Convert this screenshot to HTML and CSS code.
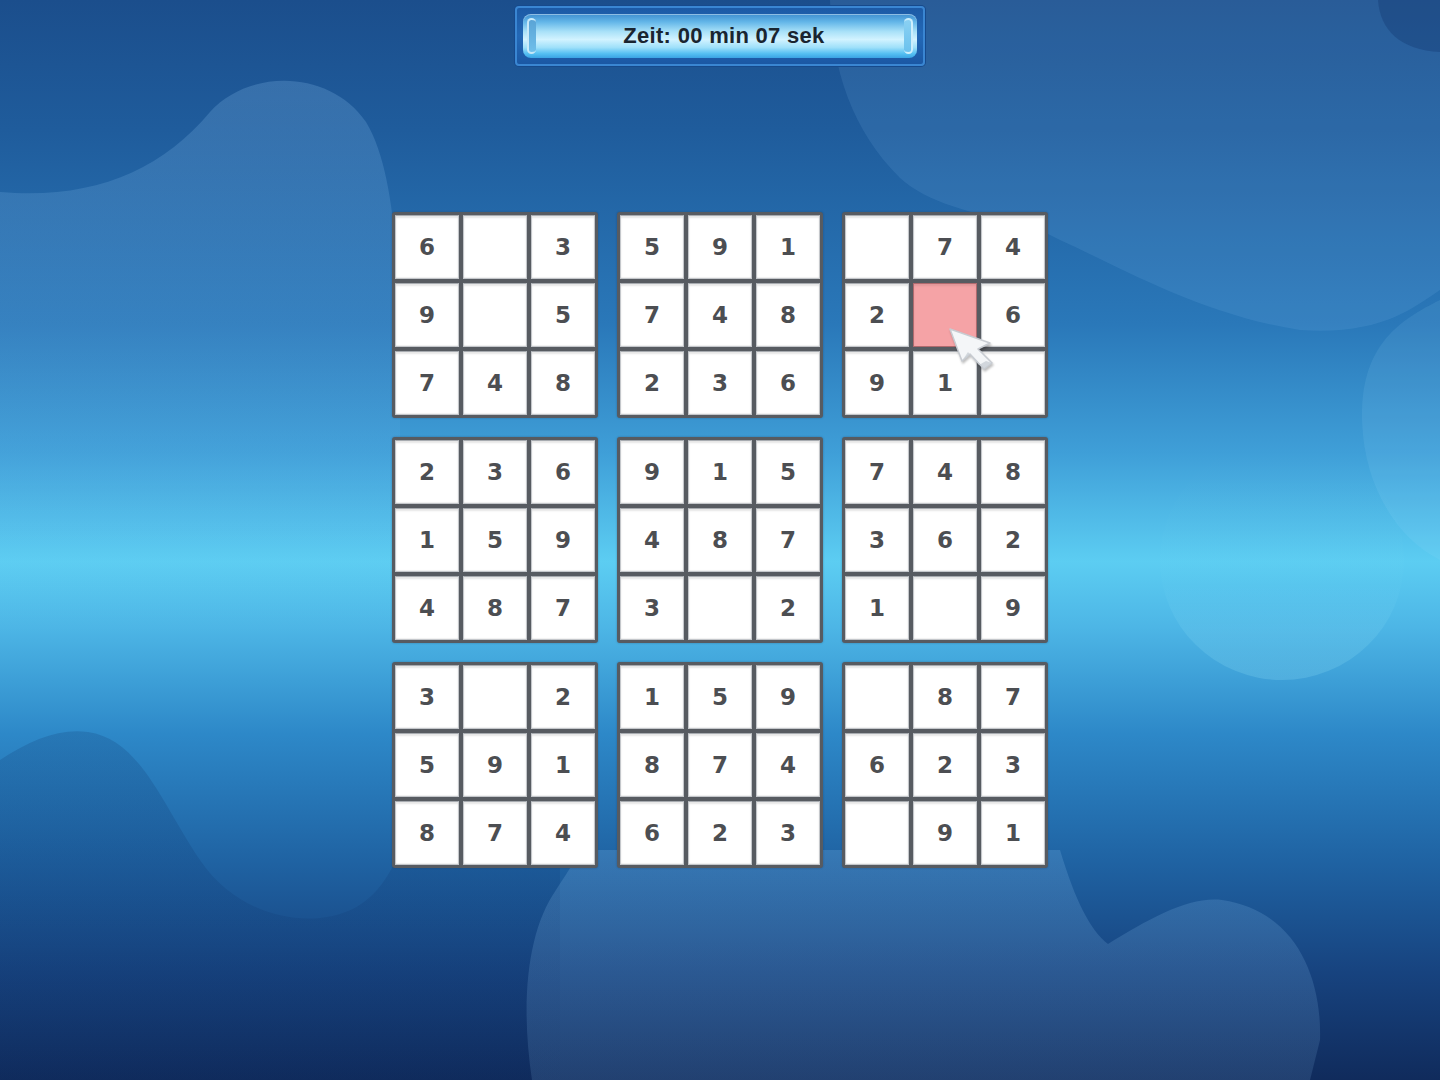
FILE: index.html
```html
<!DOCTYPE html>
<html lang="de">
<head>
<meta charset="utf-8">
<title>Sudoku</title>
<link rel="stylesheet" href="styles.css">
</head>
<body>
<div class="screen">
  <svg class="bg-art" viewBox="0 0 1440 1080" preserveAspectRatio="none" aria-hidden="true">
    <defs>
      <linearGradient id="lightFade" x1="0" y1="0" x2="0" y2="1">
        <stop offset="0" stop-color="#9fd4ff" stop-opacity="0.2"/>
        <stop offset="0.6" stop-color="#9fd4ff" stop-opacity="0.07"/>
        <stop offset="1" stop-color="#9fd4ff" stop-opacity="0"/>
      </linearGradient>
      <linearGradient id="lightBottom" x1="0" y1="0" x2="0" y2="1">
        <stop offset="0" stop-color="#8fc4f0" stop-opacity="0.2"/>
        <stop offset="1" stop-color="#8fc4f0" stop-opacity="0.14"/>
      </linearGradient>
      <linearGradient id="cyanFade" x1="0" y1="0" x2="0" y2="1">
        <stop offset="0" stop-color="#a8f4ff" stop-opacity="0"/>
        <stop offset="0.6" stop-color="#a8f4ff" stop-opacity="0.02"/>
        <stop offset="0.8" stop-color="#a8f4ff" stop-opacity="0.12"/>
        <stop offset="1" stop-color="#a8f4ff" stop-opacity="0.18"/>
      </linearGradient>
      <linearGradient id="darkFade" x1="0" y1="0" x2="0" y2="1">
        <stop offset="0" stop-color="#0a2a60" stop-opacity="0.18"/>
        <stop offset="1" stop-color="#0a2a60" stop-opacity="0.1"/>
      </linearGradient>
    </defs>
    <!-- left top light blob -->
    <path d="M0,192 C90,200 160,172 210,112 C250,68 330,70 366,122 C394,168 398,260 400,340 L400,640 L0,640 Z" fill="url(#lightFade)"/>
    <!-- right top light blob -->
    <path d="M830,0 C832,70 852,130 900,178 C930,205 980,215 1030,225 L1060,240 C1110,262 1200,315 1300,330 C1380,335 1410,310 1440,290 L1440,0 Z" fill="#9fd4ff" fill-opacity="0.11"/>
    <path d="M1378,0 C1380,30 1400,50 1440,52 L1440,0 Z" fill="#0c2f66" fill-opacity="0.3"/>
    <!-- right edge light bump -->
    <path d="M1440,300 C1400,320 1360,345 1362,420 C1364,490 1400,540 1440,560 Z" fill="#a8e6ff" fill-opacity="0.1"/>
    <!-- cyan round blob middle right -->
    <ellipse cx="1282" cy="560" rx="122" ry="120" fill="url(#cyanFade)"/>
    <!-- bottom left dark blob -->
    <path d="M0,760 C30,740 60,728 88,732 C140,740 160,800 200,860 C230,905 280,922 320,918 C355,914 378,898 396,860 L560,860 L560,1080 L0,1080 Z" fill="url(#darkFade)"/>
    <!-- bottom center light blob -->
    <path d="M532,1080 C520,1000 528,930 556,890 C562,880 570,870 580,850 L1060,850 C1075,900 1090,930 1108,944 C1150,918 1190,896 1222,900 C1292,910 1322,972 1320,1040 L1310,1080 Z" fill="url(#lightBottom)"/>
  </svg>

  <header class="timer">
    <div class="timer-bar">
      <span class="cap cap-left"></span>
      <span class="timer-text">Zeit: 00 min 07 sek</span>
      <span class="cap cap-right"></span>
    </div>
  </header>

  <main class="board-wrap">
    <div class="board">
      <div class="block">
        <div class="cell">6</div><div class="cell"></div><div class="cell">3</div>
        <div class="cell">9</div><div class="cell"></div><div class="cell">5</div>
        <div class="cell">7</div><div class="cell">4</div><div class="cell">8</div>
      </div>
      <div class="block">
        <div class="cell">5</div><div class="cell">9</div><div class="cell">1</div>
        <div class="cell">7</div><div class="cell">4</div><div class="cell">8</div>
        <div class="cell">2</div><div class="cell">3</div><div class="cell">6</div>
      </div>
      <div class="block">
        <div class="cell"></div><div class="cell">7</div><div class="cell">4</div>
        <div class="cell">2</div><div class="cell selected"></div><div class="cell">6</div>
        <div class="cell">9</div><div class="cell">1</div><div class="cell"></div>
      </div>

      <div class="block">
        <div class="cell">2</div><div class="cell">3</div><div class="cell">6</div>
        <div class="cell">1</div><div class="cell">5</div><div class="cell">9</div>
        <div class="cell">4</div><div class="cell">8</div><div class="cell">7</div>
      </div>
      <div class="block">
        <div class="cell">9</div><div class="cell">1</div><div class="cell">5</div>
        <div class="cell">4</div><div class="cell">8</div><div class="cell">7</div>
        <div class="cell">3</div><div class="cell"></div><div class="cell">2</div>
      </div>
      <div class="block">
        <div class="cell">7</div><div class="cell">4</div><div class="cell">8</div>
        <div class="cell">3</div><div class="cell">6</div><div class="cell">2</div>
        <div class="cell">1</div><div class="cell"></div><div class="cell">9</div>
      </div>

      <div class="block">
        <div class="cell">3</div><div class="cell"></div><div class="cell">2</div>
        <div class="cell">5</div><div class="cell">9</div><div class="cell">1</div>
        <div class="cell">8</div><div class="cell">7</div><div class="cell">4</div>
      </div>
      <div class="block">
        <div class="cell">1</div><div class="cell">5</div><div class="cell">9</div>
        <div class="cell">8</div><div class="cell">7</div><div class="cell">4</div>
        <div class="cell">6</div><div class="cell">2</div><div class="cell">3</div>
      </div>
      <div class="block">
        <div class="cell"></div><div class="cell">8</div><div class="cell">7</div>
        <div class="cell">6</div><div class="cell">2</div><div class="cell">3</div>
        <div class="cell"></div><div class="cell">9</div><div class="cell">1</div>
      </div>

      <svg class="cursor" viewBox="0 0 60 44" aria-hidden="true">
        <path d="M4,2 L16,34 L24,27 L38,42 L46,36 L32,22 L44,16 Z" fill="#f4f6f8" stroke="#c8ccd2" stroke-width="1.5" stroke-linejoin="round"/>
        <path d="M16,34 L24,27 L38,42 L46,36 L40,34 L33,38 L22,25 Z" fill="#c9cfd6" opacity="0.8"/>
      </svg>
    </div>
  </main>
</div>
</body>
</html>
```
FILE: styles.css
```css
html, body {
  margin: 0;
  padding: 0;
}

body {
  width: 1440px;
  height: 1080px;
  overflow: hidden;
  font-family: "DejaVu Sans", Verdana, sans-serif;
}

.screen {
  position: relative;
  width: 1440px;
  height: 1080px;
  overflow: hidden;
  display: flex;
  flex-direction: column;
  align-items: center;
  background: linear-gradient(to bottom,
    #1b4e8c 0%,
    #1f5c9c 12%,
    #2a78b9 30%,
    #3f9fd8 42%,
    #5ccdf2 52%,
    #4db6e6 58%,
    #2d88c8 68%,
    #1f62a2 80%,
    #17437f 90%,
    #102b5c 100%);
}

.bg-art {
  position: absolute;
  left: 0;
  top: 0;
  width: 1440px;
  height: 1080px;
  z-index: 0;
}

/* ---------- Timer ---------- */
.timer {
  position: relative;
  z-index: 1;
  margin-top: 6px;
  width: 410px;
  height: 60px;
  box-sizing: border-box;
  padding: 6px 6px;
  background: linear-gradient(to bottom, #1c5aa6 0%, #2368b6 50%, #1b58a4 100%);
  border: 2px solid #3a86d2;
  border-radius: 4px;
  box-shadow: 0 0 0 1px #164a8c;
}

.timer-bar {
  height: 100%;
  display: flex;
  align-items: center;
  justify-content: space-between;
  border-radius: 8px;
  background: linear-gradient(to bottom,
    #3f8fd0 0%,
    #63b6e8 18%,
    #a9e1f8 40%,
    #d2f3ff 58%,
    #9fe0fa 76%,
    #55c0f2 90%,
    #3aa4e4 100%);
  box-shadow: inset 0 1px 0 rgba(255,255,255,0.4);
}

.cap {
  width: 9px;
  height: 36px;
  border-radius: 7px;
  border: 2px solid rgba(225, 248, 255, 0.8);
  box-sizing: border-box;
}

.cap-left {
  margin-left: 4px;
  border-right: none;
  background: linear-gradient(to bottom, #5aa4d6, #6fbfea);
}

.cap-right {
  margin-right: 4px;
  border-left: none;
  background: linear-gradient(to bottom, #8ad0f2, #6cc2ee);
}

.timer-text {
  font-family: "Liberation Sans", Arial, sans-serif;
  font-weight: bold;
  font-size: 22px;
  color: #1a2530;
  letter-spacing: 0.3px;
  margin-left: 8px;
}

/* ---------- Board ---------- */
.board-wrap {
  position: relative;
  z-index: 1;
  margin-top: 146px;
}

.board {
  position: relative;
  display: grid;
  grid-template-columns: repeat(3, 206px);
  grid-template-rows: repeat(3, 206px);
  gap: 19px;
}

.block {
  display: grid;
  grid-template-columns: repeat(3, 1fr);
  grid-template-rows: repeat(3, 1fr);
  gap: 4px;
  padding: 3px;
  box-sizing: border-box;
  background: #575b61;
  border-radius: 3px;
  box-shadow: 0 0 2px rgba(20, 40, 70, 0.4);
}

.cell {
  display: flex;
  align-items: center;
  justify-content: center;
  background: #ffffff;
  border: 1px solid #c4c7cb;
  border-top-color: #a7abb0;
  box-shadow: inset 0 2px 2px rgba(0,0,0,0.10), inset 0 -1px 1px rgba(0,0,0,0.06);
  font-family: "DejaVu Sans", Verdana, sans-serif;
  font-weight: bold;
  font-size: 23px;
  color: #4c4e52;
  line-height: 1;
}

.cell.selected {
  background: #f5a3a6;
  border-color: #b06a6e;
  box-shadow: inset 0 2px 2px rgba(0,0,0,0.08);
}

.cursor {
  position: absolute;
  left: 554px;
  top: 115px;
  width: 60px;
  height: 44px;
  z-index: 2;
  filter: drop-shadow(1px 2px 1px rgba(0,0,0,0.25));
}
```
